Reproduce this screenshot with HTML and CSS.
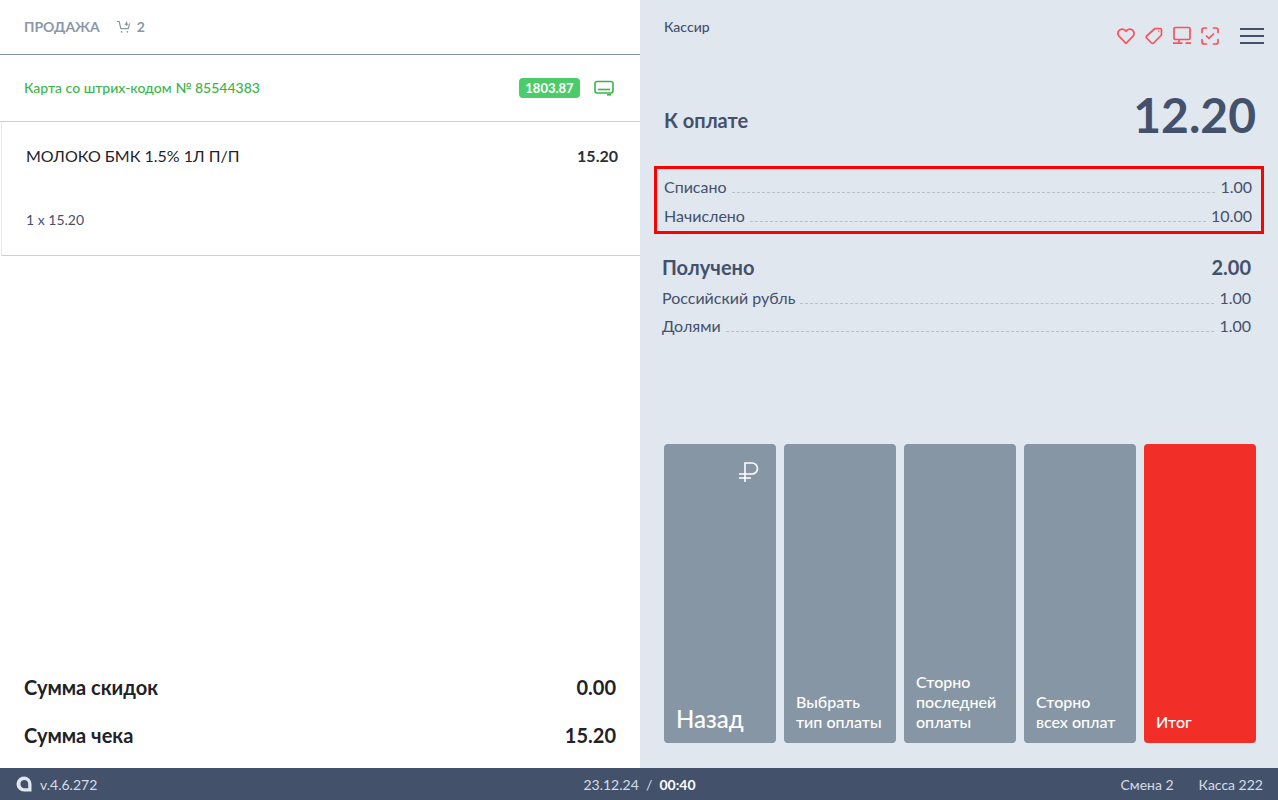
FILE: index.html
```html
<!DOCTYPE html>
<html lang="ru">
<head>
<meta charset="utf-8">
<title>Касса</title>
<link rel="stylesheet" href="styles.css">
</head>
<body>
<div class="app">
  <main class="main">
    <section class="left">
      <header class="sale-head">
        <span class="sale-title">ПРОДАЖА</span>
        <svg class="cart" viewBox="0 0 16 16" width="16" height="16" fill="none" stroke="#8a97a8" stroke-width="1.2"><path d="M1 2.5h2.2l1.6 7.2h7.4l1.5-5.4"/><path d="M10.5 2.5v3.5M9 4.8l1.5 1.4L12 4.8"/><circle cx="5.6" cy="12.8" r=".9" fill="#8a97a8" stroke="none"/><circle cx="11.4" cy="12.8" r=".9" fill="#8a97a8" stroke="none"/></svg>
        <span class="sale-count">2</span>
      </header>
      <div class="card-row">
        <span class="card-name">Карта со штрих-кодом № 85544383</span>
        <span class="card-badge">1803.87</span>
        <svg class="card-icon" viewBox="0 0 20 16" width="20" height="16" fill="none" stroke="#3bb54a" stroke-width="1.6"><rect x="1" y="1.5" width="18" height="11.5" rx="2.2"/><path d="M4 9.5h12"/><path d="M13 14.8h4"/></svg>
      </div>
      <article class="item">
        <div class="item-top"><span>МОЛОКО БМК 1.5% 1Л П/П</span><b>15.20</b></div>
        <div class="item-qty">1 x 15.20</div>
      </article>
      <div class="totals">
        <div class="total"><span>Сумма скидок</span><span>0.00</span></div>
        <div class="total"><span>Сумма чека</span><span>15.20</span></div>
      </div>
    </section>
    <section class="right">
      <div class="top">
        <span class="cashier">Кассир</span>
        <div class="icons">
          <svg viewBox="0 0 20 20" width="20" height="20" fill="none" stroke="#f9525a" stroke-width="1.7" stroke-linejoin="round"><path d="M10 17.3 3.2 10.4a4.5 4.5 0 0 1 0-6 4.2 4.2 0 0 1 6 0l.8.9.8-.9a4.2 4.2 0 0 1 6 0 4.5 4.5 0 0 1 0 6z"/></svg>
          <svg viewBox="0 0 20 20" width="20" height="20" fill="none" stroke="#f9525a" stroke-width="1.7" stroke-linejoin="round"><path d="M11 2.5h5.2a1.3 1.3 0 0 1 1.3 1.3V9L9.6 17a1.4 1.4 0 0 1-2 0L2.6 12a1.4 1.4 0 0 1 0-2z"/><circle cx="14.7" cy="5.3" r=".7" fill="#f9525a" stroke="none"/></svg>
          <svg viewBox="0 0 20 20" width="20" height="20" fill="none" stroke="#f9525a" stroke-width="1.7"><rect x="2" y="1.5" width="16" height="12" rx="1.3"/><path d="M7 13.5v3.7M1 17.2h9.5M13.5 17.2h5.5"/></svg>
          <svg viewBox="0 0 20 20" width="20" height="20" fill="none" stroke="#f9525a" stroke-width="1.7" stroke-linecap="round" stroke-linejoin="round"><path d="M6.5 2H4a2 2 0 0 0-2 2v2.5M13.5 2H16a2 2 0 0 1 2 2v2.5M6.5 18H4a2 2 0 0 1-2-2v-2.5M13.5 18H16a2 2 0 0 0 2-2v-2.5"/><path d="m6.5 10 2.4 2.3 4.6-4.3"/></svg>
          <div class="burger"><i></i><i></i><i></i></div>
        </div>
      </div>
      <div class="due"><span class="due-label">К оплате</span><span class="due-value">12.20</span></div>
      <div class="box">
        <div class="line"><span>Списано</span><i></i><span>1.00</span></div>
        <div class="line"><span>Начислено</span><i></i><span>10.00</span></div>
      </div>
      <div class="received">
        <div class="received-head"><span>Получено</span><span class="received-sum">2.00</span></div>
        <div class="line"><span>Российский рубль</span><i></i><span>1.00</span></div>
        <div class="line"><span>Долями</span><i></i><span>1.00</span></div>
      </div>
      <div class="buttons">
        <button class="btn btn-back">
          <svg class="ruble" viewBox="0 0 22 22" width="22" height="22" fill="none" stroke="#fff" stroke-width="1.6"><path d="M7 21V2h7a5.5 5.5 0 0 1 0 11H1M1 17h12"/></svg>
          Назад
        </button>
        <button class="btn">Выбрать<br>тип оплаты</button>
        <button class="btn">Сторно<br>последней<br>оплаты</button>
        <button class="btn">Сторно<br>всех оплат</button>
        <button class="btn btn-red">Итог</button>
      </div>
    </section>
  </main>
  <footer class="footer">
    <div class="foot-left">
      <svg viewBox="0 0 16 16" width="16" height="16"><path d="M8 .5a7.5 7.5 0 1 0 0 15h7.5V8A7.5 7.5 0 0 0 8 .5zm0 3.4A4.2 4.2 0 0 1 12.2 8v4.2H8a4.2 4.2 0 0 1 0-8.3z" fill="#e0e7ef"/></svg>
      <span>v.4.6.272</span>
    </div>
    <div class="foot-mid">23.12.24&nbsp; / &nbsp;<b>00:40</b></div>
    <div class="foot-right"><span>Смена 2</span><span>Касса 222</span></div>
  </footer>
</div>
</body>
</html>
```
FILE: styles.css
```css
* { box-sizing: border-box; }
html, body { margin: 0; height: 100%; }
body { font-family: Lato, "Noto Sans", sans-serif; color: #44516b; background: #fff; overflow: hidden; }
.app { height: 800px; display: flex; flex-direction: column; }
.main { flex: 1; display: flex; min-height: 0; }

.left { width: 640px; display: flex; flex-direction: column; background: #fff; }
.sale-head { height: 55px; border-bottom: 1px solid #8496a6; padding: 0 24px 1px; display: flex; align-items: center; color: #8a97a8; font-size: 14px; font-weight: 700; }
.cart { margin-left: 16px; margin-right: 5px; }
.card-row { height: 67px; border-bottom: 1px solid #c6d1dc; padding: 0 26px 1px 24px; display: flex; align-items: center; }
.card-name { flex: 1; color: #3bb54a; font-size: 14px; font-weight: 500; }
.card-badge { width: 61px; height: 20px; background: #4ccb6b; color: #fff; border-radius: 4px; font-size: 13px; font-weight: 700; display: flex; align-items: center; justify-content: center; }
.card-icon { margin-left: 14px; }
.item { height: 134px; margin-left: 1px; border-left: 1px solid #e4e9ef; border-bottom: 1px solid #c6d1dc; padding: 24px 22px 0 24px; }
.item-top { display: flex; justify-content: space-between; color: #1f2229; font-size: 16px; line-height: 19px; }
.item-top b { font-weight: 700; color: #2a2f3a; }
.item-qty { margin-top: 46px; font-size: 14px; line-height: 17px; }
.totals { margin-top: auto; padding: 0 24px 21px; }
.total { display: flex; justify-content: space-between; font-size: 20px; font-weight: 700; color: #1f2229; line-height: 24px; margin-top: 24px; }

.right { flex: 1; background: #e0e7ef; padding: 0 14px 25px; display: flex; flex-direction: column; }
.top { height: 63px; display: flex; justify-content: space-between; align-items: flex-start; padding: 18px 0 0 10px; }
.cashier { font-size: 14px; font-weight: 500; line-height: 17px; }
.icons { display: flex; align-items: center; gap: 8px; padding-top: 8px; }
.burger { width: 24px; margin-left: 12px; display: flex; flex-direction: column; gap: 5px; }
.burger i { display: block; height: 2px; background: #44516b; }
.due { height: 103px; padding: 0 8px 0 10px; display: flex; justify-content: space-between; align-items: center; }
.due-label { font-size: 20px; font-weight: 700; padding-top: 10px; }
.due-value { font-size: 48px; font-weight: 700; line-height: 58px; }
.box { height: 68px; border: 3px solid #ff0000; padding: 3px 9px 0 7px; }
.line { display: flex; align-items: baseline; font-size: 16px; line-height: 28px; }
.line i { flex: 1; border-bottom: 1px dashed #b7c0c9; margin: 0 5px; }
.box .line { line-height: 29px; }
.received { padding: 21px 13px 0 8px; }
.received-head { display: flex; justify-content: space-between; font-size: 20px; font-weight: 700; line-height: 24px; margin-bottom: 5px; }
.received-sum { font-weight: 700; }
.buttons { margin-top: auto; padding: 0 8px 0 10px; display: flex; gap: 8px; }
.btn { position: relative; width: 112px; height: 299px; background: #8796a5; color: #fff; border: 0; border-radius: 4px; padding: 0 12px 11px; font-family: inherit; font-size: 16px; font-weight: 500; line-height: 20px; text-align: left; display: flex; flex-direction: column; justify-content: flex-end; }
.btn-back { font-size: 24px; font-weight: 500; line-height: 29px; padding-bottom: 10px; }
.btn-red { background: #f12f28; }
.ruble { position: absolute; top: 17px; right: 16px; }

.footer { height: 32px; background: #44516b; color: #d5dde6; font-size: 14px; display: grid; grid-template-columns: 1fr 1fr 1fr; align-items: center; padding: 0 15px 0 16px; }
.foot-left { display: flex; align-items: center; gap: 8px; }
.foot-mid { text-align: center; }
.foot-mid b { color: #fff; font-weight: 700; }
.foot-right { display: flex; justify-content: flex-end; gap: 25px; }
```
